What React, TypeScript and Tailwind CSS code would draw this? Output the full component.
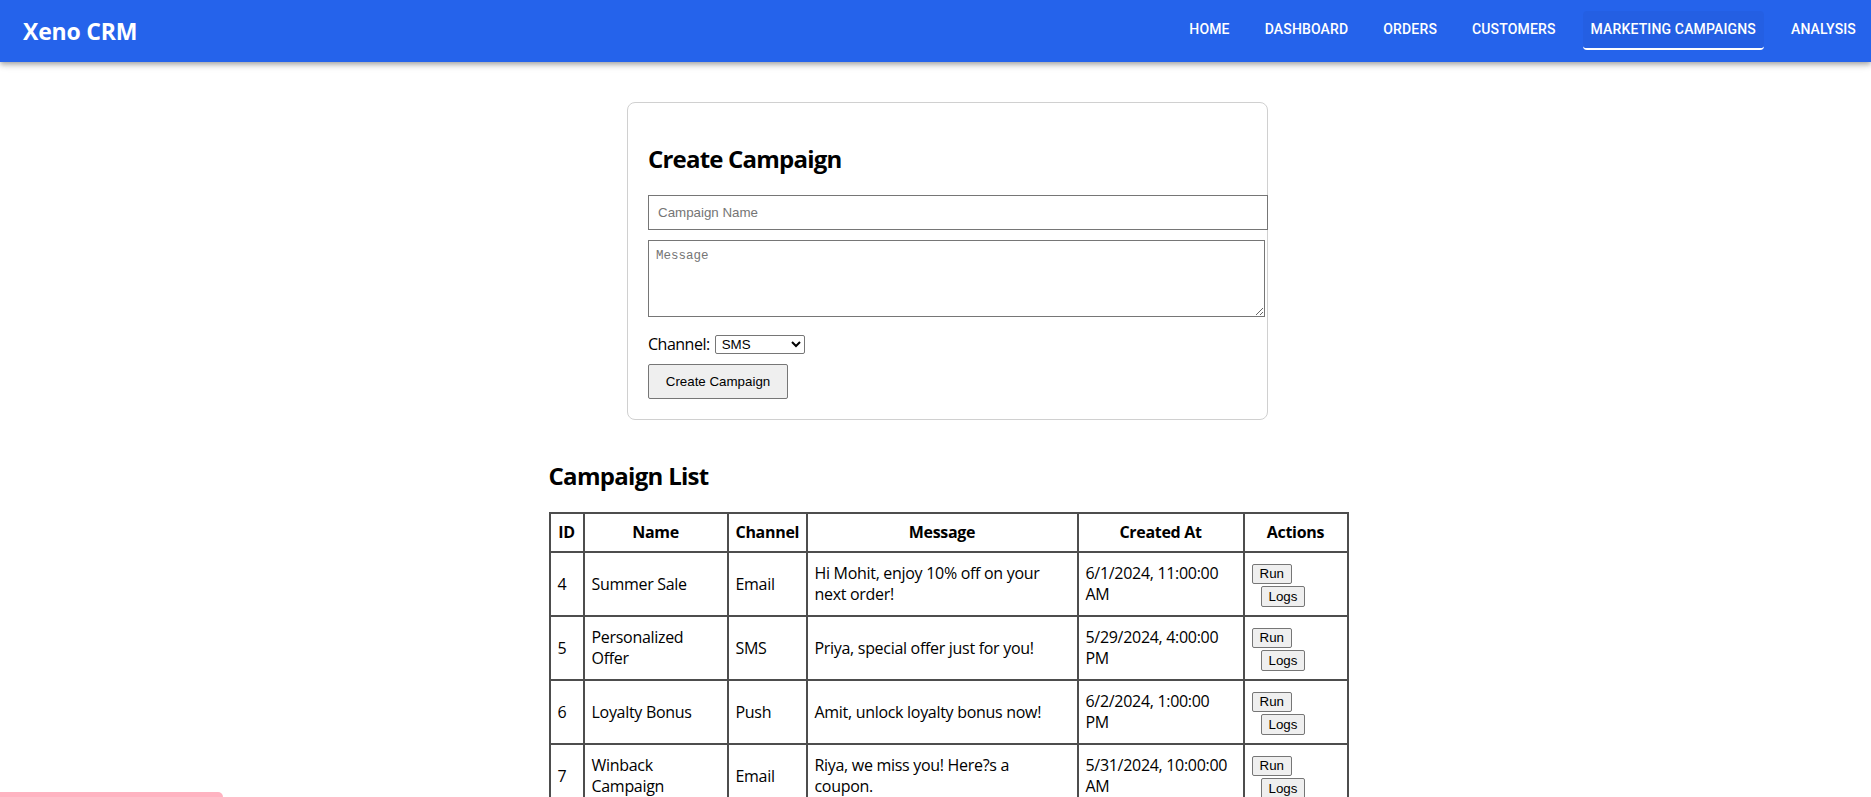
import React, { useState } from "react";

type Campaign = {
    id: number;
    name: string;
    channel: string;
    message: string;
    createdAt: string;
};

const NAV_ITEMS = ["Home", "Dashboard", "Orders", "Customers", "Marketing Campaigns", "Analysis"];

const CAMPAIGNS: Campaign[] = [
    { id: 4, name: "Summer Sale", channel: "Email", message: "Hi Mohit, enjoy 10% off on your next order!", createdAt: "6/1/2024, 11:00:00 AM" },
    { id: 5, name: "Personalized Offer", channel: "SMS", message: "Priya, special offer just for you!", createdAt: "5/29/2024, 4:00:00 PM" },
    { id: 6, name: "Loyalty Bonus", channel: "Push", message: "Amit, unlock loyalty bonus now!", createdAt: "6/2/2024, 1:00:00 PM" },
    { id: 7, name: "Winback Campaign", channel: "Email", message: "Riya, we miss you! Here?s a coupon.", createdAt: "5/31/2024, 10:00:00 AM" },
];

const HEADERS = [
    { label: "ID", w: "w-[34px]" },
    { label: "Name", w: "w-[144px]" },
    { label: "Channel", w: "w-[79px]" },
    { label: "Message", w: "w-[271px]" },
    { label: "Created At", w: "w-[166px]" },
    { label: "Actions", w: "w-[104px]" },
];

const Navbar = () => {
    return (
        <header className="relative z-10 flex h-[62px] items-start bg-[#2563eb] text-white shadow-[0_2px_4px_-1px_rgba(0,0,0,0.2),0_4px_5px_0_rgba(0,0,0,0.14),0_1px_10px_0_rgba(0,0,0,0.12)]">
            {/* 로고 */}
            <div className="self-center pl-[23px] font-['Open_Sans',sans-serif] text-[23px] font-bold leading-[31px] tracking-[-0.2px]">
                Xeno CRM
            </div>

            {/* 메뉴 */}
            <nav className="ml-auto flex items-start gap-[19px] pr-[7px] pt-[11px]">
                {NAV_ITEMS.map((item) => {
                    const active = item === "Marketing Campaigns";
                    return (
                        <button
                            key={item}
                            className={`rounded-[4px] px-[8px] py-[6px] font-['Roboto',sans-serif] text-[14px] font-medium uppercase leading-[24.5px] tracking-[0.15px] ${
                                active ? "border-b-2 border-white bg-[#245fe3]" : ""
                            }`}
                        >
                            {item}
                        </button>
                    );
                })}
            </nav>
        </header>
    );
};

const CreateCampaign = () => {
    const [name, setName] = useState<string>("");
    const [message, setMessage] = useState<string>("");
    const [channel, setChannel] = useState<string>("SMS");

    return (
        <div className="w-[641px] rounded-[8px] border border-[#d0d0d0] px-[20px] pb-[20px] pt-[20px]">
            <h2 className="mb-[20px] mt-[20px] text-[24px] font-bold leading-[32px] tracking-[-0.8px]">
                Create Campaign
            </h2>

            <input
                type="text"
                value={name}
                onChange={(e) => setName(e.target.value)}
                placeholder="Campaign Name"
                className="block h-[35px] w-[620px] border border-[#767676] px-[9px] font-['Liberation_Sans',Arial,sans-serif] text-[13.33px] tracking-normal placeholder:text-[#757575]"
            />

            <textarea
                value={message}
                onChange={(e) => setMessage(e.target.value)}
                placeholder="Message"
                className="mt-[10px] block h-[77px] w-[617px] resize border border-[#767676] px-[7px] py-[6px] font-['Liberation_Mono',monospace] text-[12.5px] tracking-normal placeholder:text-[#757575]"
            />

            <div className="mt-[18px] flex h-[19px] items-center">
                <label className="text-[16px] leading-[21px] tracking-[-0.5px]">Channel:</label>
                <select
                    value={channel}
                    onChange={(e) => setChannel(e.target.value)}
                    className="ml-[5px] h-[19px] w-[90px] rounded-[2px] border border-[#767676] pl-[2px] font-['Liberation_Sans',Arial,sans-serif] text-[13.33px] tracking-normal"
                >
                    <option>SMS</option>
                    <option>Email</option>
                    <option>Push</option>
                </select>
            </div>

            <button className="mt-[10px] block h-[35px] w-[140px] rounded-[2px] border border-[#767676] bg-[#efefef] font-['Liberation_Sans',Arial,sans-serif] text-[13.33px] tracking-normal text-black">
                Create Campaign
            </button>
        </div>
    );
};

const CampaignList = () => {
    return (
        <div className="mt-[40px] w-[798px]">
            <h2 className="mb-[20px] text-[24px] font-bold leading-[32px] tracking-[-0.7px]">Campaign List</h2>

            <table className="w-[798px] table-fixed border-collapse border-2 border-[#4d4d4d]">
                <thead>
                    <tr>
                        {HEADERS.map((h) => (
                            <th key={h.label} className={`${h.w} border-2 border-[#4d4d4d] px-[7px] py-[8px] text-center font-bold leading-[21px]`}>
                                {h.label}
                            </th>
                        ))}
                    </tr>
                </thead>
                <tbody>
                    {CAMPAIGNS.map((c) => (
                        <tr key={c.id}>
                            <td className="border-2 border-[#4d4d4d] px-[7px] py-[8px] align-middle leading-[21px]">{c.id}</td>
                            <td className="border-2 border-[#4d4d4d] px-[7px] py-[8px] align-middle leading-[21px]">{c.name}</td>
                            <td className="border-2 border-[#4d4d4d] px-[7px] py-[8px] align-middle leading-[21px]">{c.channel}</td>
                            <td className="border-2 border-[#4d4d4d] px-[7px] py-[8px] align-middle leading-[21px]">{c.message}</td>
                            <td className="border-2 border-[#4d4d4d] px-[7px] py-[8px] align-middle leading-[21px]">{c.createdAt}</td>
                            <td className="border-2 border-[#4d4d4d] px-[7px] py-[8px] align-middle">
                                <div className="flex flex-col items-start font-['Liberation_Sans',Arial,sans-serif] text-[13.33px] tracking-normal">
                                    <button className="mt-[3px] h-[20px] rounded-[2px] border border-[#767676] bg-[#efefef] px-[7px] leading-[16px]">
                                        Run
                                    </button>
                                    <button className="ml-[9px] mt-[2px] h-[21px] rounded-[2px] border border-[#767676] bg-[#efefef] px-[7px] leading-[17px]">
                                        Logs
                                    </button>
                                </div>
                            </td>
                        </tr>
                    ))}
                </tbody>
            </table>
        </div>
    );
};

const App = () => {
    return (
        <div className="relative h-[797px] overflow-hidden bg-white font-['Open_Sans',sans-serif] text-[16px] tracking-[-0.3px] text-black">
            <Navbar />

            <main className="flex flex-col items-center pl-[24px] pt-[40px]">
                <CreateCampaign />
                <CampaignList />
            </main>

            {/* 하단 알림 */}
            <div className="absolute left-0 top-[792px] h-[20px] w-[223px] rounded-tr-[5px] bg-[#ffb3c1]" />
        </div>
    );
};

export default App;
